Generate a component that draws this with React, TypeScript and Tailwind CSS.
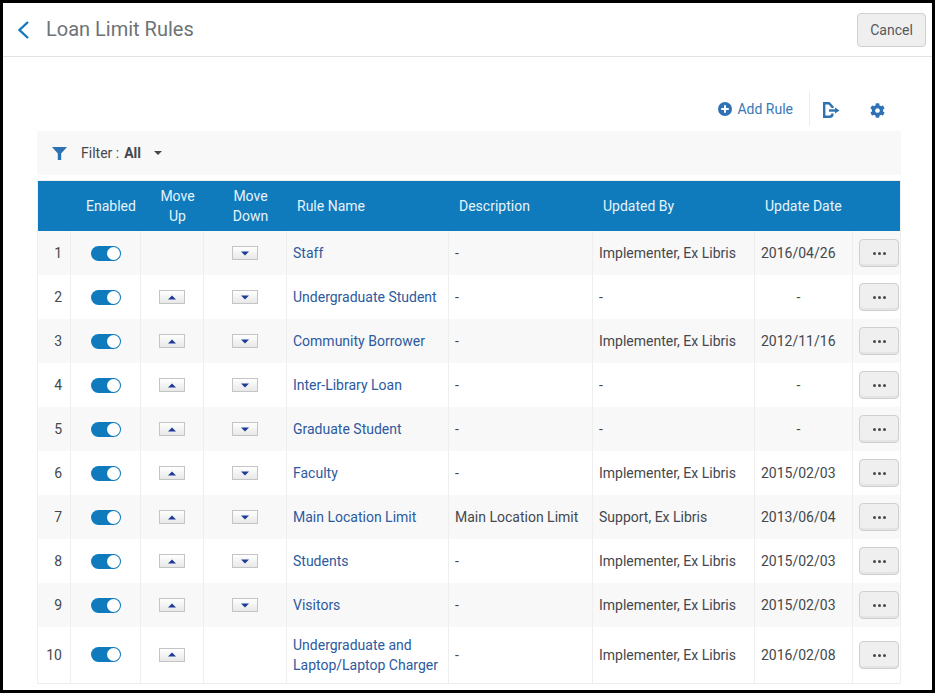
import {FaCog} from 'react-icons/fa';

type Rule = {
  name: string[];
  description: string;
  updatedBy: string;
  updateDate: string;
};

const RULES: Rule[] = [
  {name: ['Staff'], description: '-', updatedBy: 'Implementer, Ex Libris', updateDate: '2016/04/26'},
  {name: ['Undergraduate Student'], description: '-', updatedBy: '-', updateDate: '-'},
  {name: ['Community Borrower'], description: '-', updatedBy: 'Implementer, Ex Libris', updateDate: '2012/11/16'},
  {name: ['Inter-Library Loan'], description: '-', updatedBy: '-', updateDate: '-'},
  {name: ['Graduate Student'], description: '-', updatedBy: '-', updateDate: '-'},
  {name: ['Faculty'], description: '-', updatedBy: 'Implementer, Ex Libris', updateDate: '2015/02/03'},
  {name: ['Main Location Limit'], description: 'Main Location Limit', updatedBy: 'Support, Ex Libris', updateDate: '2013/06/04'},
  {name: ['Students'], description: '-', updatedBy: 'Implementer, Ex Libris', updateDate: '2015/02/03'},
  {name: ['Visitors'], description: '-', updatedBy: 'Implementer, Ex Libris', updateDate: '2015/02/03'},
  {name: ['Undergraduate and', 'Laptop/Laptop Charger'], description: '-', updatedBy: 'Implementer, Ex Libris', updateDate: '2016/02/08'},
];

function Toggle() {
  return (
    <span className="mx-auto flex h-[15px] w-[30px] items-center justify-end rounded-full bg-[#0f7bbc]">
      <span className="mr-px h-[13px] w-[13px] rounded-full bg-white" />
    </span>
  );
}

function MoveButton({direction}: {direction: 'up' | 'down'}) {
  return (
    <span className="mx-auto flex h-[14px] w-[26px] items-center justify-center border border-[#c4c4c4] bg-gradient-to-b from-white to-[#e8e8e8]">
      <svg width="8" height="5" viewBox="0 0 8 5">
        <path
          d={direction === 'up' ? 'M4 0.5 L8 4.5 L0 4.5 Z' : 'M0 0.5 L8 0.5 L4 4.5 Z'}
          fill="#1d3a94"
        />
      </svg>
    </span>
  );
}

export default function App() {
  return (
    <div className="h-[693px] w-[935px] overflow-hidden border-[3px] border-black bg-white font-['Roboto',sans-serif] text-sm text-[#44484d]">
      <header className="flex h-[54px] items-center justify-between border-b border-[#e2e2e2] pr-[6px] pl-[13px]">
        <div className="flex items-center gap-[16px]">
          <svg width="14" height="20" viewBox="0 0 14 20" fill="none">
            <path d="M12 2 L3.5 10 L12 18" stroke="#1479bb" strokeWidth="2.4" />
          </svg>
          <h1 className="mb-px text-xl leading-none text-[#6e7378]">Loan Limit Rules</h1>
        </div>
        <button
          type="button"
          className="h-[34px] w-[69px] rounded-[4px] border border-[#cfcfcf] bg-[#efefef] text-sm text-[#55595e]"
        >
          Cancel
        </button>
      </header>

      <main className="pr-[31px] pl-[34px]">
        <div className="mt-[35px] flex h-[34px] items-center justify-end text-[#3a78b8]">
          <button type="button" className="flex items-center gap-[5px]">
            <svg width="14" height="14" viewBox="0 0 14 14">
              <circle cx="7" cy="7" r="7" fill="#2f72b4" />
              <path d="M7 3.2 V10.8 M3.2 7 H10.8" stroke="#fff" strokeWidth="2" />
            </svg>
            Add Rule
          </button>
          <span className="mr-[12px] ml-[16px] h-[34px] w-px bg-[#ececec]" />
          <svg className="mt-[2px]" width="18" height="16" viewBox="0 0 18 16" fill="none">
            <path
              d="M10.5 6 L10.5 5 L7 1.2 H2.2 V14.8 H7.5 C9.5 14.8 10.5 13.5 10.5 11.5"
              stroke="#2f72b4"
              strokeWidth="2.4"
            />
            <path d="M7 8.5 H14" stroke="#2f72b4" strokeWidth="2.4" />
            <path d="M13 5.5 L17.5 8.5 L13 11.5 Z" fill="#2f72b4" />
          </svg>
          <span className="mt-[2px] mr-[16px] ml-[30px] flex">
            <FaCog size={15} className="text-[#2f72b4]" />
          </span>
        </div>

        <div className="mt-[5px] flex h-[44px] items-center bg-[#f8f8f8] pl-[15px]">
          <svg width="15" height="13" viewBox="0 0 15 13">
            <path d="M0 0 H15 L9.2 6.5 V13 H5.8 V6.5 Z" fill="#2f72b4" />
          </svg>
          <span className="ml-[14px]">
            Filter : <b className="ml-[1.5px] font-bold">All</b>
          </span>
          <svg className="ml-[13.5px]" width="8" height="4" viewBox="0 0 8 4">
            <path d="M0 0 H8 L4 4 Z" fill="#44484d" />
          </svg>
        </div>

        <table className="mt-[4.5px] w-[863px] table-fixed border-collapse border border-[#eeeeee]">
          <colgroup>
            <col className="w-[33px]" />
            <col className="w-[70px]" />
            <col className="w-[63px]" />
            <col className="w-[83px]" />
            <col className="w-[162px]" />
            <col className="w-[144px]" />
            <col className="w-[162px]" />
            <col className="w-[98px]" />
            <col className="w-[48px]" />
          </colgroup>
          <thead>
            <tr className="h-[51px] bg-[#0f7bbc] text-[#e6f3fb]">
              <th className="font-normal" />
              <th className="pl-[11px] font-normal">Enabled</th>
              <th className="pl-[11px] leading-5 font-normal">Move<br />Up</th>
              <th className="pl-[11px] leading-5 font-normal">Move<br />Down</th>
              <th className="pl-[10.5px] text-left font-normal">Rule Name</th>
              <th className="pl-[10.5px] text-left font-normal">Description</th>
              <th className="pl-[10.5px] text-left font-normal">Updated By</th>
              <th className="pl-[10.5px] text-left font-normal whitespace-nowrap">Update Date</th>
              <th className="font-normal" />
            </tr>
          </thead>
          <tbody>
            {RULES.map((rule, index) => {
              const isLast = index === RULES.length - 1;

              return (
                <tr
                  key={rule.name[0]}
                  className={`${isLast ? 'h-[56px]' : 'h-[44px]'} ${index % 2 === 0 && !isLast ? 'bg-[#f8f8f8]' : 'bg-white'}`}
                >
                  <td className="border-r border-[#eeeeee] pr-[8px] text-right">{index + 1}</td>
                  <td className="border-r border-[#eeeeee]"><Toggle /></td>
                  <td className="border-r border-[#eeeeee]">
                    {index > 0 && <MoveButton direction="up" />}
                  </td>
                  <td className="border-r border-[#eeeeee]">
                    {!isLast && <MoveButton direction="down" />}
                  </td>
                  <td className="border-r border-[#eeeeee] pl-[6px] leading-5 text-[#2c5aa0]">
                    {rule.name.map((line) => (
                      <div key={line} className="whitespace-nowrap">{line}</div>
                    ))}
                  </td>
                  <td className="border-r border-[#eeeeee] pl-[6px] whitespace-nowrap">{rule.description}</td>
                  <td className="border-r border-[#eeeeee] pl-[6px] whitespace-nowrap">{rule.updatedBy}</td>
                  <td className={`border-r border-[#eeeeee] ${rule.updateDate === '-' ? 'pr-[10px] text-center' : 'pl-[6px]'}`}>
                    {rule.updateDate}
                  </td>
                  <td className="pl-[6px]">
                    <button
                      type="button"
                      className="flex h-[28px] w-[40px] items-center justify-center gap-[2px] rounded-[4px] border border-[#cfcfcf] bg-[#efefef] pt-px shadow-[inset_0_-2px_0_#e4e4e4]"
                    >
                      <span className="h-[3px] w-[3px] rounded-full bg-[#44484d]" />
                      <span className="h-[3px] w-[3px] rounded-full bg-[#44484d]" />
                      <span className="h-[3px] w-[3px] rounded-full bg-[#44484d]" />
                    </button>
                  </td>
                </tr>
              );
            })}
          </tbody>
        </table>
      </main>
    </div>
  );
}
